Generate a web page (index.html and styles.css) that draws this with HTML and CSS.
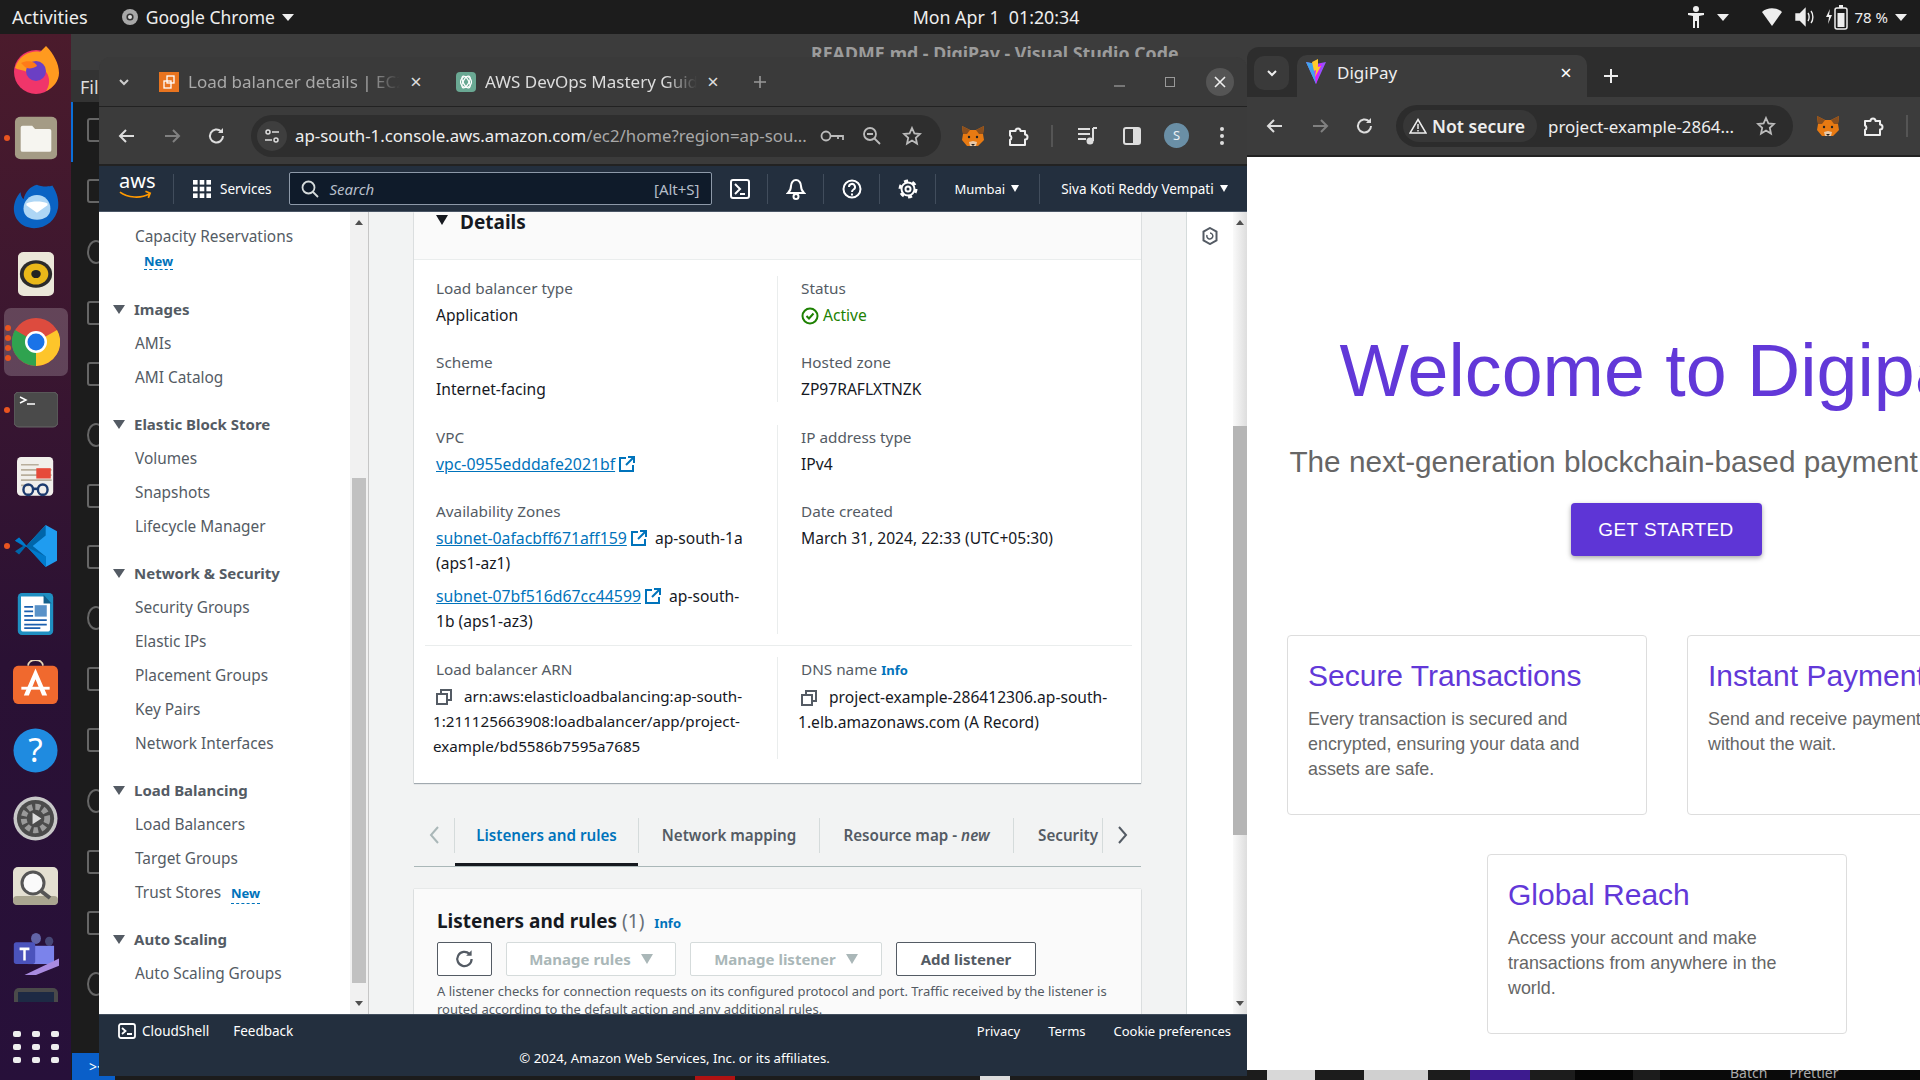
FILE: index.html
```html
<!DOCTYPE html>
<html>

<head>
    <title>Desktop</title>
    <link rel="stylesheet" href="styles.css">
</head>

<body>
    <div class="desktop">
        <header class="topbar">
            <div class="top-left">
                <span class="activities">Activities</span>
                <svg width="18" height="18" viewBox="0 0 18 18"><circle cx="9" cy="9" r="8" fill="#a8a8a8"/><circle cx="9" cy="9" r="3.6" fill="#333"/><circle cx="9" cy="9" r="2" fill="#ddd"/></svg>
                <span>Google Chrome</span>
                <i class="tri"></i>
            </div>
            <div class="clock">Mon Apr 1&nbsp; 01:20:34</div>
            <div class="top-right">
                <svg class="t-acc" width="18" height="24" viewBox="0 0 18 24" fill="#eee"><circle cx="9" cy="4" r="3"/><path d="M1 8h16v2l-5 1v12h-2v-7H8v7H6V11l-5-1z"/></svg>
                <i class="tri t-caret1"></i>
                <svg class="t-wifi" width="22" height="20" viewBox="0 0 22 20" fill="#eee"><path d="M1 5C6 0 16 0 21 5L11 19z"/></svg>
                <svg class="t-vol" width="20" height="20" viewBox="0 0 20 20" fill="none" stroke="#eee" stroke-width="1.4"><path d="M1 7h4l5-5v16l-5-5H1z" fill="#eee"/><path d="M13 6c1.500 2 1.500 6 0 8M16 4c2.500 3 2.500 9 0 12"/></svg>
                <svg class="t-bat" width="26" height="26" viewBox="0 0 26 26"><path d="M5 5 1 13h3l-1 7 4-9H4z" fill="#eee"/><rect x="10" y="4" width="12" height="21" rx="2" fill="none" stroke="#eee" stroke-width="1.500"/><rect x="14" y="1" width="4" height="3" fill="#eee"/><rect x="12.500" y="9" width="7" height="14" fill="#eee"/></svg>
                <span class="t-pct">78 %</span>
                <i class="tri"></i>
            </div>
        </header>

        <aside class="dock">
            <div class="dock-item">
                <svg width="46" height="48" viewBox="0 0 46 48"><circle cx="23" cy="26" r="22" fill="#f0356a"/><path d="M2 22C6 8 20 4 27 6l6-6c8 8 13 18 13 27 0 8-6 15-13 18 6-8 4-22-10-25-6 0-9 2-9 6-4-2-8-2-12-4z" fill="#ff9a1f"/><circle cx="23" cy="25" r="10" fill="#6b3fc4"/><path d="M8 17c6-3 14-2 16 3-4 3-10 3-12 1z" fill="#ff7a18"/></svg>
            </div>
            <div class="dock-item run">
                <svg width="44" height="44" viewBox="0 0 46 54" preserveAspectRatio="none"><rect x="1" y="1" width="44" height="52" rx="6" fill="#a49b85"/><path d="M7 14a2 2 0 0 1 2-2h10l3 4h15a2 2 0 0 1 2 2v24a2 2 0 0 1-2 2H9a2 2 0 0 1-2-2z" fill="#f6f5f0"/></svg>
            </div>
            <div class="dock-item">
                <svg width="48" height="46" viewBox="0 0 50 54" preserveAspectRatio="none"><path d="M26 2c3 2 12 3 16 1 5 8 7 18 6 26-2 14-12 24-25 24C10 53 1 42 2 28 3 20 6 14 9 11c0 3 1 6 3 8C14 10 19 4 26 2z" fill="#0a63c4"/><path d="M12 30c0-9 6-16 14-16s14 7 14 16-6 13-14 13-14-4-14-13z" fill="#aed6f5"/><path d="M15 26l11 9 11-9v-2c-6-3-16-3-22 0z" fill="#fff"/></svg>
            </div>
            <div class="dock-item">
                <svg width="36" height="44" viewBox="0 0 38 54" preserveAspectRatio="none"><rect x="0" y="0" width="38" height="54" rx="6" fill="#ebe7d9"/><ellipse cx="19" cy="27" rx="17" ry="17" fill="#2b2b2b"/><ellipse cx="19" cy="27" rx="13" ry="13" fill="#e9b819"/><ellipse cx="19" cy="27" rx="5" ry="5" fill="#222"/></svg>
            </div>
            <div class="dock-item dock-active">
                <svg width="48" height="48" viewBox="0 0 48 48"><circle cx="24" cy="24" r="24" fill="#dd4b3e"/><path d="M24 24 45 12A24 24 0 0 1 24 48z" fill="#fdc52b"/><path d="M24 24 24 48A24 24 0 0 1 3 12z" fill="#2fa34f"/><circle cx="24" cy="24" r="11" fill="#fff"/><circle cx="24" cy="24" r="8.500" fill="#1a73e8"/></svg>
                <div class="dots"><b></b><b></b><b></b><b></b></div>
            </div>
            <div class="dock-item run">
                <svg width="44" height="36" viewBox="0 0 44 36"><rect width="44" height="35" rx="5" fill="#4a4a4a" stroke="#666"/><path d="M6 5l6 3-6 3" fill="none" stroke="#fff" stroke-width="1.500"/><path d="M13 12h8" stroke="#fff" stroke-width="1.500"/></svg>
            </div>
            <div class="dock-item">
                <svg width="37" height="43" viewBox="0 0 46 50" preserveAspectRatio="none"><rect width="45" height="45" rx="5" fill="#f1efeb"/><path d="M5 9h22M5 15h38M5 21h38M5 27h38M5 33h10" stroke="#b8ae9c" stroke-width="2"/><rect x="24" y="13" width="18" height="12" fill="#e64a3a"/><ellipse cx="14" cy="38" rx="6" ry="6" fill="none" stroke="#1d3b6e" stroke-width="3"/><ellipse cx="32" cy="38" rx="6" ry="6" fill="none" stroke="#1d3b6e" stroke-width="3"/><path d="M20 37h6" stroke="#1d3b6e" stroke-width="3"/></svg>
            </div>
            <div class="dock-item run">
                <svg width="42" height="42" viewBox="0 0 52 40" preserveAspectRatio="none"><path d="M38 0 52 6V34L38 40 14 20z" fill="#1f9cf0"/><path d="M38 0 14 20 5 12 0 15 10 20 0 25 5 28 14 20 38 40V30L22 20 38 10z" fill="#0065a9"/><path d="M0 15 5 12 38 40V30L12 20z" fill="#007acc"/></svg>
            </div>
            <div class="dock-item">
                <svg width="37" height="44" viewBox="0 0 46 50" preserveAspectRatio="none"><rect x="1" y="1" width="44" height="48" rx="5" fill="#1f8fc2"/><path d="M5 5h28l8 8v30a2 2 0 0 1-2 2H7a2 2 0 0 1-2-2z" fill="#fff"/><path d="M33 3l10 10H33z" fill="#15608c"/><path d="M9 17h11M9 22h11M9 27h11M9 32h28M9 37h28M9 41h20" stroke="#1b5fae" stroke-width="2"/><rect x="22" y="15" width="15" height="13" fill="#5a92c8"/></svg>
            </div>
            <div class="dock-item">
                <svg width="45" height="44" viewBox="0 0 54 46" preserveAspectRatio="none"><rect y="6" width="54" height="40" rx="6" fill="#f0692e"/><path d="M18 6c1-8 17-8 18 0" fill="none" stroke="#e7d5b5" stroke-width="2"/><path d="M27 9 41 37h-6l-8-17-8 17h-6z" fill="#fff"/><path d="M10 28h34v3H10z" fill="#fff"/></svg>
            </div>
            <div class="dock-item">
                <svg width="45" height="45" viewBox="0 0 46 46"><circle cx="23" cy="23" r="22.500" fill="#1f8be0"/><text x="23" y="35" text-anchor="middle" class="help-q">?</text></svg>
            </div>
            <div class="dock-item">
                <svg width="45" height="45" viewBox="0 0 46 46"><circle cx="23" cy="23" r="22.500" fill="#c8c8c8"/><circle cx="23" cy="23" r="19" fill="#4b4b4b"/><circle cx="23" cy="23" r="12" fill="none" stroke="#9a9a9a" stroke-width="6" stroke-dasharray="5 3"/><path d="M20 17l9 6-9 6z" fill="#ddd"/></svg>
            </div>
            <div class="dock-item">
                <svg width="45" height="38" viewBox="0 0 45 38"><rect width="45" height="38" rx="5" fill="#e4e0d2"/><rect y="29" width="45" height="9" rx="4" fill="#a9a590"/><circle cx="20" cy="16" r="11" fill="#fafafa" stroke="#555" stroke-width="3"/><path d="M28 24l9 7" stroke="#555" stroke-width="4"/></svg>
            </div>
            <div class="dock-item">
                <svg width="46" height="42" viewBox="0 0 56 46" preserveAspectRatio="none"><ellipse cx="28" cy="6" rx="6" ry="6" fill="#6264a7"/><ellipse cx="44" cy="9" rx="5" ry="5" fill="#464775"/><path d="M18 14h32v20H18z" fill="#7b83eb"/><rect x="1" y="10" width="26" height="24" rx="3" fill="#4b53bc"/><path d="M8 16h12v3h-4.500v11h-3V19H8z" fill="#fff"/><path d="M14 46 56 28v8L28 46z" fill="#a98be0"/></svg>
            </div>
            <div class="dock-item dock-cut">
                <svg width="44" height="14" viewBox="0 0 44 14"><rect width="44" height="30" rx="5" fill="#4a4a4a"/><rect x="4" y="4" width="36" height="26" fill="#1d2a44"/></svg>
            </div>
            <div class="dock-apps">
                <b></b><b></b><b></b><b></b><b></b><b></b><b></b><b></b><b></b>
            </div>
        </aside>

        <div class="vscode">
            <div class="vs-title">README.md - DigiPay - Visual Studio Code</div>
            <div class="vs-menu">Fil</div>
            <div class="vs-body">
                <div class="vs-activity">
                    <i class="vs-ic"></i><i class="vs-ic"></i><i class="vs-ic"></i><i class="vs-ic"></i><i class="vs-ic"></i><i class="vs-ic"></i><i class="vs-ic"></i><i class="vs-ic"></i><i class="vs-ic"></i><i class="vs-ic"></i><i class="vs-ic"></i><i class="vs-ic"></i><i class="vs-ic"></i><i class="vs-ic"></i><i class="vs-ic"></i>
                </div>
                <div class="vs-thumbs">
                    <span class="th th-red"></span><span class="th th-grey"></span><span class="th th-doc1"></span><span class="th th-doc2"></span><span class="th th-purple"></span><span class="th th-black"></span>
                </div>
            </div>
            <div class="vs-status">
                <span class="vs-remote">&gt;&lt;</span>
                <span class="vs-status-text">Batch &nbsp; &nbsp; &nbsp;Prettier</span>
            </div>
        </div>

        <!-- aws window -->
        <div class="chrome aws-win">
            <div class="tabstrip">
                <svg class="tab-chev" width="14" height="14" viewBox="0 0 14 14" fill="none" stroke="#ccc" stroke-width="2"><path d="M3 5l4 4 4-4"/></svg>
                <div class="tab">
                    <svg width="20" height="20" viewBox="0 0 20 20"><rect width="20" height="20" fill="#e8741f"/><rect x="8" y="4" width="7" height="7" fill="none" stroke="#fff" stroke-width="1.300"/><rect x="5" y="9" width="7" height="7" fill="none" stroke="#fff" stroke-width="1.300"/></svg>
                    <span class="tab-title">Load balancer details | EC2</span>
                    <span class="tab-x">&#215;</span>
                </div>
                <div class="tab">
                    <svg width="20" height="20" viewBox="0 0 20 20"><rect width="20" height="20" rx="4" fill="#6aa893"/><g fill="none" stroke="#fff" stroke-width="1.200"><circle cx="10" cy="10" r="5.500"/><ellipse cx="10" cy="10" rx="6.500" ry="2.800" transform="rotate(60 10 10)"/><ellipse cx="10" cy="10" rx="6.500" ry="2.800" transform="rotate(-60 10 10)"/></g></svg>
                    <span class="tab-title tab-title-on">AWS DevOps Mastery Guide</span>
                    <span class="tab-x">&#215;</span>
                </div>
                <svg class="tab-plus" width="16" height="16" viewBox="0 0 16 16" stroke="#999" stroke-width="1.600"><path d="M8 2v12M2 8h12"/></svg>
                <div class="win-ctrls">
                    <i class="wc-min"></i>
                    <i class="wc-max"></i>
                    <span class="wc-close"><svg width="12" height="12" viewBox="0 0 12 12" stroke="#eee" stroke-width="1.600"><path d="M1 1l10 10M11 1 1 11"/></svg></span>
                </div>
            </div>
            <div class="toolbar">
                <span class="tb-btn"><svg width="20" height="20" viewBox="0 0 20 20" fill="none" stroke="#ddd" stroke-width="2"><path d="M17 10H3M9 4l-6 6 6 6"/></svg></span>
                <span class="tb-btn"><svg width="20" height="20" viewBox="0 0 20 20" fill="none" stroke="#808080" stroke-width="2"><path d="M3 10h14M11 4l6 6-6 6"/></svg></span>
                <span class="tb-btn"><svg width="20" height="20" viewBox="0 0 20 20" fill="none" stroke="#ddd" stroke-width="2"><path d="M16 10a6.500 6.500 0 1 1-2-4.700"/><path d="M16 2v5h-5" fill="#ddd" stroke="none"/></svg></span>
                <div class="omni omni-aws">
                    <span class="omni-tune"><svg width="16" height="16" viewBox="0 0 16 16" fill="none" stroke="#ddd" stroke-width="1.500"><circle cx="4" cy="4" r="2"/><path d="M8 4h7M1 12h7"/><circle cx="12" cy="12" r="2"/></svg></span>
                    <span class="omni-url"><span class="url-host">ap-south-1.console.aws.amazon.com</span>/ec2/home?region=ap-sou...</span>
                    <svg class="om-key" width="24" height="14" viewBox="0 0 24 14" fill="none" stroke="#bbb" stroke-width="1.800"><circle cx="6" cy="7" r="4.500"/><path d="M11 7h12v4M18 7v3"/></svg>
                    <svg class="om-zoom" width="20" height="20" viewBox="0 0 20 20" fill="none" stroke="#bbb" stroke-width="1.800"><circle cx="8" cy="8" r="6"/><path d="M12.500 12.500 18 18M5 8h6"/></svg>
                    <svg class="om-star" width="20" height="20" viewBox="0 0 20 20" fill="none" stroke="#bbb" stroke-width="1.800"><path d="M10 2l2.400 5.400 5.600.6-4.200 3.900 1.200 5.700-5-3-5 3 1.200-5.700L2 8l5.600-.6z"/></svg>
                </div>
                <span class="tb-btn tb-fox"><svg width="24" height="24" viewBox="0 0 24 24"><path d="M1 2l8 4h6l8-4-1 8 1 6-6 6H6l-5-6 1-6z" fill="#e87a12"/><path d="M1 2l8 4-3 4H2zM23 2l-8 4 3 4h4z" fill="#8a4f1e"/><circle cx="8" cy="13" r="1.200" fill="#222"/><circle cx="16" cy="13" r="1.200" fill="#222"/><path d="M8 18l4-1 4 1-1 4H9z" fill="#e8c8a8"/><path d="M10 20h4l-2 2z" fill="#222"/></svg></span>
                <span class="tb-btn"><svg width="22" height="22" viewBox="0 0 22 22" fill="none" stroke="#eee" stroke-width="2" stroke-linejoin="round"><path d="M3 6h5.500a2.500 2.500 0 0 1 5 0H18v3.500a2.500 2.500 0 0 1 0 5V20H3v-5a2.500 2.500 0 0 0 0-4.500z"/></svg></span>
                <i class="tb-sep"></i>
                <span class="tb-btn"><svg width="22" height="22" viewBox="0 0 22 22" fill="none" stroke="#ddd" stroke-width="2"><path d="M2 4h12M2 9h12M2 14h8M17 3v13"/><circle cx="14" cy="16" r="2.500" fill="#ddd"/><path d="M17 3h4"/></svg></span>
                <span class="tb-btn"><svg width="20" height="20" viewBox="0 0 20 20"><rect x="2" y="2" width="16" height="16" rx="2" fill="none" stroke="#ddd" stroke-width="2"/><rect x="11" y="2" width="7" height="16" fill="#ddd"/></svg></span>
                <span class="tb-btn"><span class="avatar">S</span></span>
                <span class="tb-btn"><svg width="6" height="20" viewBox="0 0 6 20" fill="#ddd"><circle cx="3" cy="3" r="2"/><circle cx="3" cy="10" r="2"/><circle cx="3" cy="17" r="2"/></svg></span>
            </div>

            <nav class="awsnav">
                <div class="aws-logo">
                    <span class="aws-word">aws</span>
                    <svg width="34" height="10" viewBox="0 0 36 10" fill="none" stroke="#f90" stroke-width="1.800"><path d="M1 2c8 6 22 7 31 2M28 1l5 2-2 5"/></svg>
                </div>
                <i class="nav-sep"></i>
                <svg class="svc-grid" width="18" height="18" viewBox="0 0 18 18" fill="#fff"><rect width="4.600" height="4.600"/><rect x="6.700" width="4.600" height="4.600"/><rect x="13.400" width="4.600" height="4.600"/><rect y="6.700" width="4.600" height="4.600"/><rect x="6.700" y="6.700" width="4.600" height="4.600"/><rect x="13.400" y="6.700" width="4.600" height="4.600"/><rect y="13.400" width="4.600" height="4.600"/><rect x="6.700" y="13.400" width="4.600" height="4.600"/><rect x="13.400" y="13.400" width="4.600" height="4.600"/></svg>
                <span class="nav-txt svc-txt">Services</span>
                <div class="nav-search">
                    <svg width="18" height="18" viewBox="0 0 18 18" fill="none" stroke="#d5dbdb" stroke-width="1.800"><circle cx="7.500" cy="7.500" r="6"/><path d="M12 12l5 5"/></svg>
                    <span class="s-hint">Search</span>
                    <span class="s-key">[Alt+S]</span>
                </div>
                <span class="nav-ic"><svg width="20" height="20" viewBox="0 0 20 20" fill="none" stroke="#fff" stroke-width="2"><rect x="1" y="1" width="18" height="18" rx="2"/><path d="M5 5l5 5-5 5M10 15h5"/></svg></span>
                <i class="nav-sep"></i>
                <span class="nav-ic"><svg width="20" height="22" viewBox="0 0 20 22" fill="none" stroke="#fff" stroke-width="2"><path d="M10 2c-3 0-5 3-5 6 0 4-3 7-3 7h16s-3-3-3-7c0-3-2-6-5-6z"/><circle cx="10" cy="18.500" r="2.500"/></svg></span>
                <i class="nav-sep"></i>
                <span class="nav-ic"><svg width="20" height="20" viewBox="0 0 20 20" fill="none" stroke="#fff" stroke-width="2"><circle cx="10" cy="10" r="8.500"/><path d="M7 8a3 3 0 1 1 4.500 2.500c-1 .6-1.500 1-1.500 2.500M10 14.500v2"/></svg></span>
                <i class="nav-sep"></i>
                <span class="nav-ic"><svg width="20" height="20" viewBox="0 0 20 20" fill="none" stroke="#fff"><circle cx="10" cy="10" r="6.500" stroke-width="2"/><circle cx="10" cy="10" r="8" stroke-width="3" stroke-dasharray="4 4.380"/><circle cx="10" cy="10" r="2.500" stroke-width="2"/></svg></span>
                <i class="nav-sep"></i>
                <span class="nav-txt nav-region">Mumbai</span>
                <i class="nav-tri"></i>
                <i class="nav-sep nav-sep-user"></i>
                <span class="nav-txt nav-user">Siva Koti Reddy Vempati</span>
                <i class="nav-tri"></i>
            </nav>

            <div class="aws-body">
                <aside class="sidebar">
                    <div class="side-list">
                        <a class="side-item">Capacity Reservations</a>
                        <a class="side-new">New</a>
                        <div class="side-head">Images</div>
                        <a class="side-item">AMIs</a>
                        <a class="side-item">AMI Catalog</a>
                        <div class="side-head">Elastic Block Store</div>
                        <a class="side-item">Volumes</a>
                        <a class="side-item">Snapshots</a>
                        <a class="side-item">Lifecycle Manager</a>
                        <div class="side-head">Network &amp; Security</div>
                        <a class="side-item">Security Groups</a>
                        <a class="side-item">Elastic IPs</a>
                        <a class="side-item">Placement Groups</a>
                        <a class="side-item">Key Pairs</a>
                        <a class="side-item">Network Interfaces</a>
                        <div class="side-head">Load Balancing</div>
                        <a class="side-item">Load Balancers</a>
                        <a class="side-item">Target Groups</a>
                        <a class="side-item">Trust Stores <span class="side-new-inline">New</span></a>
                        <div class="side-head">Auto Scaling</div>
                        <a class="side-item">Auto Scaling Groups</a>
                    </div>
                    <div class="scrollbar side-scroll"><i class="sb-up"></i><i class="sb-thumb"></i><i class="sb-down"></i></div>
                </aside>

                <main class="aws-main">
                    <section class="panel details">
                        <div class="panel-head">
                            <i class="det-tri"></i>
                            <h2>Details</h2>
                        </div>
                        <div class="det-group det-g1">
                            <div class="det-col">
                                <div class="kv"><label>Load balancer type</label><p>Application</p></div>
                                <div class="kv"><label>Scheme</label><p>Internet-facing</p></div>
                            </div>
                            <div class="det-col">
                                <div class="kv"><label>Status</label><p class="active"><svg width="18" height="18" viewBox="0 0 18 18" fill="none" stroke="#1d8102" stroke-width="2"><circle cx="9" cy="9" r="7.500"/><path d="M5.500 9l2.500 2.500 4.500-5"/></svg>Active</p></div>
                                <div class="kv"><label>Hosted zone</label><p>ZP97RAFLXTNZK</p></div>
                            </div>
                        </div>
                        <div class="det-group det-g2">
                            <div class="det-col">
                                <div class="kv"><label>VPC</label><p><a class="ext">vpc-0955edddafe2021bf</a><svg class="ext-ic" width="16" height="16" viewBox="0 0 16 16" fill="none" stroke="#0073bb" stroke-width="2"><path d="M7 2H1v13h13V9M9 1h6v6M15 1 7 9"/></svg></p></div>
                                <div class="kv"><label>Availability Zones</label>
                                    <p><a class="ext">subnet-0afacbff671aff159</a><svg class="ext-ic" width="16" height="16" viewBox="0 0 16 16" fill="none" stroke="#0073bb" stroke-width="2"><path d="M7 2H1v13h13V9M9 1h6v6M15 1 7 9"/></svg> &nbsp;ap-south-1a<br>(aps1-az1)</p>
                                    <p class="az2"><a class="ext">subnet-07bf516d67cc44599</a><svg class="ext-ic" width="16" height="16" viewBox="0 0 16 16" fill="none" stroke="#0073bb" stroke-width="2"><path d="M7 2H1v13h13V9M9 1h6v6M15 1 7 9"/></svg> &nbsp;ap-south-<br>1b (aps1-az3)</p>
                                </div>
                            </div>
                            <div class="det-col">
                                <div class="kv"><label>IP address type</label><p>IPv4</p></div>
                                <div class="kv"><label>Date created</label><p>March 31, 2024, 22:33 (UTC+05:30)</p></div>
                            </div>
                        </div>
                        <hr class="det-rule">
                        <div class="det-group det-g3">
                            <div class="det-col">
                                <div class="kv"><label>Load balancer ARN</label>
                                    <p class="copyable copy-arn"><svg class="copy-ic" width="16" height="16" viewBox="0 0 16 16" fill="none" stroke="#545b64" stroke-width="2"><rect x="1" y="5" width="10" height="10"/><path d="M5 5V1h10v10h-4"/></svg>arn:aws:elasticloadbalancing:ap-south-<br>1:211125663908:loadbalancer/app/project-<br>example/bd5586b7595a7685</p>
                                </div>
                            </div>
                            <div class="det-col">
                                <div class="kv"><label>DNS name <a class="info">Info</a></label>
                                    <p class="copyable"><svg class="copy-ic" width="16" height="16" viewBox="0 0 16 16" fill="none" stroke="#545b64" stroke-width="2"><rect x="1" y="5" width="10" height="10"/><path d="M5 5V1h10v10h-4"/></svg>project-example-286412306.ap-south-<br>1.elb.amazonaws.com (A Record)</p>
                                </div>
                            </div>
                        </div>
                    </section>

                    <div class="lb-tabs">
                        <svg class="tab-arrow" width="12" height="20" viewBox="0 0 12 20" fill="none" stroke="#aab7b8" stroke-width="2"><path d="M10 2 3 10l7 8"/></svg>
                        <a class="lb-tab lb-tab-on">Listeners and rules</a>
                        <a class="lb-tab lb-tab-2">Network mapping</a>
                        <a class="lb-tab lb-tab-3">Resource map - <em>new</em></a>
                        <a class="lb-tab lb-tab-4">Security</a>
                        <svg class="tab-arrow tab-arrow-r" width="12" height="20" viewBox="0 0 12 20" fill="none" stroke="#545b64" stroke-width="2"><path d="M2 2l7 8-7 8"/></svg>
                    </div>

                    <section class="panel listeners">
                        <h2>Listeners and rules <span class="count">(1)</span> <a class="info">Info</a></h2>
                        <div class="btn-row">
                            <button class="btn btn-icon"><svg width="22" height="22" viewBox="0 0 20 20" fill="none" stroke="#545b64" stroke-width="2"><path d="M16 10a6.500 6.500 0 1 1-2-4.700"/><path d="M16 2v5h-5" fill="#545b64" stroke="none"/></svg></button>
                            <button class="btn btn-off btn-rules">Manage rules <i class="btn-tri"></i></button>
                            <button class="btn btn-off btn-listener">Manage listener <i class="btn-tri"></i></button>
                            <button class="btn btn-add">Add listener</button>
                        </div>
                        <p class="listeners-txt">A listener checks for connection requests on its configured protocol and port. Traffic received by the listener is routed according to the default action and any additional rules.</p>
                    </section>
                </main>

                <aside class="rail">
                    <svg width="16" height="18" viewBox="0 0 16 18" fill="none" stroke="#545b64" stroke-width="2"><path d="M8 1l6.500 3.700v8.600L8 17l-6.500-3.700V4.700z"/><path d="M5 8a3 3 0 1 0 3-2" stroke-width="1.500"/></svg>
                </aside>
                <div class="scrollbar main-scroll"><i class="sb-up"></i><i class="sb-thumb"></i><i class="sb-down"></i></div>
            </div>

            <footer class="aws-foot">
                <div class="foot-top">
                    <svg width="18" height="18" viewBox="0 0 18 18" fill="none" stroke="#fff" stroke-width="1.800"><rect x="1" y="2" width="16" height="14" rx="2"/><path d="M4 6l3.500 3L4 12M9 12h5"/></svg>
                    <span class="foot-shell">CloudShell</span>
                    <span class="foot-fb">Feedback</span>
                    <span class="foot-links"><span>Privacy</span><span>Terms</span><span>Cookie preferences</span></span>
                </div>
                <div class="foot-copy">&#169; 2024, Amazon Web Services, Inc. or its affiliates.</div>
            </footer>
        </div>

        <!-- digipay window -->
        <div class="chrome digi-win">
            <div class="tabstrip digi-strip">
                <span class="digi-chev"><svg width="14" height="14" viewBox="0 0 14 14" fill="none" stroke="#eee" stroke-width="2"><path d="M3 5l4 4 4-4"/></svg></span>
                <div class="digi-tab">
                    <svg width="20" height="26" viewBox="0 0 20 26"><path d="M0 3l10 2 10-2-10 22z" fill="#9a4dff"/><path d="M0 3l10 2v20z" fill="#41a5ee"/><path d="M16 4 10 25l-2-16z" fill="#e01bff"/><path d="M12 0 6 3l2 9 2-1-1 7 6-11-3 1z" fill="#ffcb2b"/></svg>
                    <span class="digi-tab-title">DigiPay</span>
                    <span class="tab-x tab-x-on">&#215;</span>
                </div>
                <svg class="digi-plus" width="16" height="16" viewBox="0 0 16 16" stroke="#eee" stroke-width="2"><path d="M8 1v14M1 8h14"/></svg>
            </div>
            <div class="toolbar digi-bar">
                <span class="tb-btn"><svg width="20" height="20" viewBox="0 0 20 20" fill="none" stroke="#ddd" stroke-width="2"><path d="M17 10H3M9 4l-6 6 6 6"/></svg></span>
                <span class="tb-btn"><svg width="20" height="20" viewBox="0 0 20 20" fill="none" stroke="#808080" stroke-width="2"><path d="M3 10h14M11 4l6 6-6 6"/></svg></span>
                <span class="tb-btn"><svg width="20" height="20" viewBox="0 0 20 20" fill="none" stroke="#ddd" stroke-width="2"><path d="M16 10a6.500 6.500 0 1 1-2-4.700"/><path d="M16 2v5h-5" fill="#ddd" stroke="none"/></svg></span>
                <div class="omni omni-digi">
                    <span class="not-secure"><svg width="18" height="16" viewBox="0 0 18 16" fill="none" stroke="#eee" stroke-width="1.500"><path d="M9 1.500 17 15H1zM9 6v5M9 12v1.500"/></svg>Not secure</span>
                    <span class="omni-url url-digi">project-example-2864...</span>
                    <svg class="om-star" width="20" height="20" viewBox="0 0 20 20" fill="none" stroke="#bbb" stroke-width="1.800"><path d="M10 2l2.400 5.400 5.600.6-4.200 3.900 1.200 5.700-5-3-5 3 1.200-5.700L2 8l5.600-.6z"/></svg>
                </div>
                <span class="tb-btn tb-fox"><svg width="24" height="24" viewBox="0 0 24 24"><path d="M1 2l8 4h6l8-4-1 8 1 6-6 6H6l-5-6 1-6z" fill="#e87a12"/><path d="M1 2l8 4-3 4H2zM23 2l-8 4 3 4h4z" fill="#8a4f1e"/><circle cx="8" cy="13" r="1.200" fill="#222"/><circle cx="16" cy="13" r="1.200" fill="#222"/><path d="M8 18l4-1 4 1-1 4H9z" fill="#e8c8a8"/><path d="M10 20h4l-2 2z" fill="#222"/></svg></span>
                <span class="tb-btn"><svg width="22" height="22" viewBox="0 0 22 22" fill="none" stroke="#eee" stroke-width="2" stroke-linejoin="round"><path d="M3 6h5.500a2.500 2.500 0 0 1 5 0H18v3.500a2.500 2.500 0 0 1 0 5V20H3v-5a2.500 2.500 0 0 0 0-4.500z"/></svg></span>
                <i class="tb-sep"></i>
            </div>
            <div class="digi-page">
                <div class="digi-inner">
                    <h1>Welcome to Digipay</h1>
                    <p class="digi-sub">The next-generation blockchain-based payment solution</p>
                    <a class="digi-btn">GET STARTED</a>
                    <div class="digi-cards">
                        <div class="digi-card">
                            <h3>Secure Transactions</h3>
                            <p>Every transaction is secured and encrypted, ensuring your data and assets are safe.</p>
                        </div>
                        <div class="digi-card">
                            <h3>Instant Payments</h3>
                            <p>Send and receive payments<br>without the wait.</p>
                        </div>
                        <div class="digi-card">
                            <h3>Global Reach</h3>
                            <p>Access your account and make transactions from anywhere in the world.</p>
                        </div>
                    </div>
                </div>
            </div>
        </div>
    </div>
</body>

</html>
```

FILE: styles.css
```css
* {
    box-sizing: border-box;
}

html,
body {
    margin: 0;
    height: 100%;
    overflow: hidden;
}

body {
    font-family: "Noto Sans", sans-serif;
    font-size: 15px;
    color: #16191f;
}

i {
    display: block;
    font-style: normal;
}

svg {
    flex: none;
    display: block;
}

p,
h1,
h2,
h3 {
    margin: 0;
}

.desktop {
    position: relative;
    width: 1920px;
    height: 1080px;
    background: #2b2b2b;
    overflow: hidden;
}

/* top bar */
.topbar {
    position: absolute;
    top: 0;
    left: 0;
    width: 1920px;
    height: 34px;
    background: #1c1c1c;
    color: #eee;
    font-size: 17.5px;
    display: grid;
    grid-template-columns: 1fr auto 1fr;
    padding-left: 72px;
    align-items: center;
}

.top-left {
    display: flex;
    align-items: center;
    margin-left: -60px;
}

.top-left svg {
    margin-right: 7px;
}

.activities {
    margin-right: 33px;
    font-size: 18.2px;
}

.tri {
    width: 0;
    height: 0;
    border-left: 6px solid transparent;
    border-right: 6px solid transparent;
    border-top: 7px solid #eee;
    margin-left: 7px;
}

.clock {
    font-size: 17.8px;
}

.top-right {
    display: flex;
    align-items: center;
    justify-content: flex-end;
    padding-right: 13px;
}

.t-caret1 {
    margin: 0 32px 0 12px;
}

.t-wifi {
    margin-right: 12px;
}

.t-vol {
    margin-right: 10px;
}

.t-bat {
    margin-right: 3px;
}

.t-pct {
    font-size: 15px;
}

/* dock */
.dock {
    position: absolute;
    top: 34px;
    left: 0;
    bottom: 0;
    width: 71px;
    background: linear-gradient(#4b1b2c, #2a1134 60%, #27103a);
    display: flex;
    flex-direction: column;
    align-items: center;
    padding-top: 2px;
}

.dock-item {
    position: relative;
    width: 71px;
    height: 68px;
    display: flex;
    align-items: center;
    justify-content: center;
}

.dock-item.run::before {
    content: "";
    position: absolute;
    left: 4px;
    top: 31px;
    width: 6px;
    height: 6px;
    border-radius: 50%;
    background: #e95420;
}

.dock-active {
    width: 64px;
    border-radius: 7px;
    background: rgba(255, 255, 255, 0.2);
}

.dots {
    position: absolute;
    left: 1px;
    top: 17px;
    display: flex;
    flex-direction: column;
    gap: 4px;
}

.dots b {
    width: 6px;
    height: 6px;
    border-radius: 50%;
    background: #e95420;
}

.dock-cut {
    height: 22px;
    align-items: flex-start;
    overflow: hidden;
}

.dock-apps {
    margin-top: 21px;
    display: grid;
    grid-template-columns: repeat(3, 8px);
    gap: 7px 11px;
}

.dock-apps b {
    width: 8px;
    height: 6px;
    border-radius: 2px;
    background: #eee;
}

.help-q {
    font-family: "Noto Sans", sans-serif;
    font-size: 34px;
    fill: #fff;
}

/* vs code behind the browsers */
.vscode {
    position: absolute;
    top: 34px;
    left: 71px;
    right: 0;
    bottom: 0;
    display: flex;
    flex-direction: column;
    background: #1c1c1c;
}

.vs-title {
    height: 36px;
    background: #3c3c3c;
    color: #9b9b9b;
    font-size: 17.8px;
    font-weight: 700;
    padding: 7px 0 0 740px;
    white-space: nowrap;
    flex: none;
}

.vs-menu {
    height: 32px;
    background: #333;
    color: #ddd;
    font-size: 18px;
    padding: 5px 0 0 9px;
    flex: none;
}

.vs-body {
    position: relative;
    flex: 1;
    display: flex;
}

.vs-body::before {
    content: "";
    position: absolute;
    left: 0;
    top: 0;
    width: 2px;
    height: 60px;
    background: #0a6fd8;
}

.vs-activity {
    width: 28px;
    display: flex;
    flex-direction: column;
    gap: 37px;
    padding: 16px 0 0 16px;
    overflow: hidden;
}

.vs-ic {
    width: 18px;
    height: 24px;
    border: 2px solid #666;
    border-radius: 3px;
    flex: none;
}

.vs-ic:nth-child(3n) {
    border-radius: 50%;
}

.vs-thumbs {
    flex: 1;
    display: flex;
    align-items: flex-end;
    height: 100%;
}

.th {
    height: 10px;
    flex: none;
    background: #333;
}

.th-red {
    width: 40px;
    margin-left: 596px;
    height: 5px;
    background: #b01212;
}

.th-grey {
    width: 30px;
    margin-left: 245px;
    height: 5px;
    background: #ddd;
}

.th-doc1 {
    width: 48px;
    margin-left: 257px;
    background: #d8d8d8;
}

.th-doc2 {
    width: 64px;
    margin-left: 49px;
    background: #d0d0d0;
}

.th-purple {
    width: 60px;
    margin-left: 42px;
    background: #3d1b8f;
}

.th-black {
    width: 58px;
    margin-left: 45px;
    background: #060606;
}

.vs-status {
    position: absolute;
    left: 0;
    right: 0;
    bottom: 0;
    height: 27px;
    display: flex;
    align-items: flex-end;
}

.vs-remote {
    width: 43px;
    height: 27px;
    margin-left: 1px;
    background: #0a5fc9;
    color: #fff;
    font-size: 14px;
    line-height: 27px;
    padding-left: 17px;
}

.vs-status-text {
    position: absolute;
    left: 1589px;
    right: 0;
    bottom: 0;
    height: 10px;
    line-height: 6px;
    background: #0a0a0a;
    color: #aaa;
    font-size: 14px;
    padding-left: 70px;
    white-space: nowrap;
    overflow: hidden;
}

/* browser windows */
.chrome {
    position: absolute;
    display: flex;
    flex-direction: column;
    background: #3a3a3a;
    border-radius: 12px 12px 0 0;
    overflow: hidden;
}

.aws-win {
    left: 99px;
    top: 57px;
    width: 1148px;
    height: 1019px;
}

.digi-win {
    left: 1247px;
    top: 47px;
    width: 673px;
    height: 1023px;
    border-radius: 12px 0 0 0;
}

.tabstrip {
    height: 50px;
    display: flex;
    align-items: center;
    background: #3a3a3a;
    border-bottom: 1px solid #222;
    flex: none;
}

.tab-chev {
    margin: 0 12px 0 18px;
}

.tab {
    width: 290px;
    height: 44px;
    display: flex;
    align-items: center;
    gap: 9px;
    padding: 0 10px 0 16px;
    margin-right: 7px;
    color: #a9a9a9;
    font-size: 17px;
}

.tab-title {
    flex: 1;
    white-space: nowrap;
    overflow: hidden;
    -webkit-mask-image: linear-gradient(90deg, #000 85%, transparent);
}

.tab-title-on {
    color: #dcdcdc;
}

.tab-x {
    color: #ddd;
    font-size: 20px;
    width: 14px;
    text-align: center;
}

.tab-plus {
    margin-left: 15px;
}

.win-ctrls {
    margin-left: auto;
    display: flex;
    align-items: center;
    padding-right: 13px;
}

.wc-min {
    width: 11px;
    height: 2px;
    margin-top: 8px;
    background: #777;
}

.wc-max {
    width: 10px;
    height: 10px;
    margin: 0 31px 0 40px;
    border: 1px solid #999;
}

.wc-close {
    width: 28px;
    height: 28px;
    border-radius: 50%;
    background: #555;
    display: flex;
    align-items: center;
    justify-content: center;
}

.toolbar {
    height: 59px;
    display: flex;
    align-items: center;
    padding-left: 5px;
    background: #3b3b3b;
    border-bottom: 2px solid #222;
    flex: none;
}

.tb-btn {
    width: 45px;
    height: 40px;
    display: flex;
    align-items: center;
    justify-content: center;
    flex: none;
}

.tb-sep {
    width: 2px;
    height: 22px;
    margin: 0 11px;
    background: #555;
}

.tb-fox {
    margin-left: 9px;
}

.avatar {
    width: 25px;
    height: 25px;
    border-radius: 50%;
    background: #6a8fa6;
    color: #eaf1f5;
    font-size: 13px;
    line-height: 25px;
    text-align: center;
}

.omni {
    height: 42px;
    border-radius: 21px;
    background: #2e2e2e;
    display: flex;
    align-items: center;
    margin-left: 12px;
    flex: none;
}

.omni-aws {
    width: 690px;
    padding: 0 19px 0 6px;
}

.omni-tune {
    width: 30px;
    height: 30px;
    border-radius: 50%;
    background: #3e3e3e;
    display: flex;
    align-items: center;
    justify-content: center;
    margin-right: 8px;
}

.omni-url {
    flex: 1;
    white-space: nowrap;
    color: #a8a8a8;
    font-size: 16.8px;
    overflow: hidden;
}

.url-host {
    color: #eee;
}

.om-key {
    margin: 0 18px 0 8px;
}

.om-zoom {
    margin: 0 20px 0 0;
}

/* aws top nav */
.awsnav {
    height: 46px;
    display: flex;
    align-items: center;
    background: #232f3e;
    border-bottom: 1px solid #4a5666;
    flex: none;
}

.aws-logo {
    width: 74px;
    padding-left: 20px;
    line-height: 1;
}

.aws-word {
    display: block;
    color: #fff;
    font-size: 20px;
    line-height: 18px;
    margin-top: -6px;
}

.nav-sep {
    width: 1px;
    height: 30px;
    background: #414d5c;
    flex: none;
}

.svc-grid {
    margin-left: 19px;
}

.nav-txt {
    color: #fff;
    font-size: 13.5px;
    white-space: nowrap;
}

.svc-txt {
    margin: 0 17px 0 9px;
}

.nav-search {
    width: 423px;
    height: 33px;
    display: flex;
    align-items: center;
    gap: 11px;
    padding: 0 11px;
    background: #0f1b2a;
    border: 1px solid #8d99a8;
    border-radius: 2px;
    margin-right: 18px;
}

.s-hint {
    flex: 1;
    color: #b6bec9;
    font-style: italic;
    font-size: 15px;
}

.s-key {
    color: #b6bec9;
    font-size: 15px;
}

.nav-ic {
    width: 20px;
    margin-right: 17px;
    flex: none;
}

.nav-ic + .nav-sep {
    margin-right: 18px;
}

.nav-region {
    margin-left: 1px;
    font-size: 13px;
}

.nav-tri {
    width: 0;
    height: 0;
    margin-left: 6px;
    border-left: 4.500px solid transparent;
    border-right: 4.500px solid transparent;
    border-top: 7px solid #fff;
    flex: none;
}

.nav-sep-user {
    margin: 0 21px 0 20px;
}

/* aws layout */
.aws-body {
    flex: 1;
    min-height: 0;
    display: flex;
    background: #f2f3f3;
    position: relative;
}

.sidebar {
    width: 270px;
    display: flex;
    background: #fff;
    border-right: 1px solid #c6c6c6;
    flex: none;
}

.side-list {
    width: 252px;
    padding: 8px 0 0 36px;
    color: #545b64;
    font-size: 15.4px;
}

.side-item {
    display: block;
    height: 34px;
    line-height: 34px;
    white-space: nowrap;
}

.side-new {
    display: block;
    width: 29px;
    height: 17px;
    margin: -1px 0 0 9px;
    color: #0073bb;
    font-size: 13px;
    font-weight: 700;
    line-height: 16px;
    border-bottom: 1px dashed #0073bb;
}

.side-new-inline {
    color: #0073bb;
    font-size: 13px;
    font-weight: 700;
    margin-left: 6px;
    padding-bottom: 1px;
    border-bottom: 1px dashed #0073bb;
}

.side-head {
    position: relative;
    height: 35.5px;
    margin-top: 11.5px;
    margin-left: -1px;
    line-height: 34px;
    font-weight: 700;
    font-size: 15px;
}

.side-head::before {
    content: "";
    position: absolute;
    left: -21px;
    top: 13px;
    border-left: 6px solid transparent;
    border-right: 6px solid transparent;
    border-top: 9px solid #545b64;
}

.side-new + .side-head {
    margin-top: 21.5px;
}

.scrollbar {
    width: 18px;
    position: relative;
    background: #f1f1f1;
    flex: none;
}

.sb-up,
.sb-down {
    position: absolute;
    left: 5px;
    width: 0;
    height: 0;
    border-left: 4px solid transparent;
    border-right: 4px solid transparent;
}

.sb-up {
    top: 8px;
    border-bottom: 5px solid #505050;
}

.sb-down {
    bottom: 8px;
    border-top: 5px solid #505050;
}

.sb-thumb {
    position: absolute;
    left: 2px;
    right: 2px;
    background: #c1c1c1;
}

.side-scroll .sb-thumb {
    top: 266px;
    height: 505px;
}

.aws-main {
    width: 817px;
    padding-left: 45px;
    overflow: hidden;
    flex: none;
}

.panel {
    width: 727px;
    background: #fff;
    box-shadow: 0 1px 1px rgba(0, 22, 43, 0.3), 0 0 1px rgba(0, 22, 43, 0.25);
}

.panel-head {
    height: 48px;
    display: flex;
    padding-left: 22px;
    background: #fafafa;
    border-bottom: 1px solid #eaeded;
}

.panel-head h2 {
    font-size: 19px;
    line-height: 20px;
    margin-top: 0;
    margin-left: 12px;
}

.det-tri {
    width: 0;
    height: 0;
    margin-top: 3px;
    border-left: 6px solid transparent;
    border-right: 6px solid transparent;
    border-top: 10px solid #16191f;
}

.det-group {
    display: grid;
    grid-template-columns: 341px 1fr;
    padding-left: 22px;
}

.det-g1 {
    margin-top: 16px;
}

.det-g2 {
    margin-top: 23px;
}

.det-g3 {
    margin-top: 11px;
    padding-bottom: 24px;
}

.det-col + .det-col {
    border-left: 1px solid #eaeded;
    padding-left: 23px;
}

.kv + .kv {
    margin-top: 22px;
}

.kv label {
    display: block;
    color: #545b64;
    font-size: 15.3px;
    line-height: 25px;
}

.kv p {
    margin-top: 2px;
    font-size: 15.6px;
    line-height: 25px;
    white-space: nowrap;
}

.kv .az2 {
    margin-top: 8px;
}

.kv .copy-arn {
    font-size: 15.2px;
}

.ext {
    color: #0073bb;
    font-size: 15.8px;
    text-decoration: underline;
}

.ext-ic {
    display: inline-block;
    vertical-align: -2px;
    margin-left: 4px;
}

.active {
    display: flex;
    align-items: center;
    gap: 4px;
    color: #1d8102;
}

.info {
    color: #0073bb;
    font-size: 13px;
    font-weight: 700;
}

.copy-ic {
    display: inline-block;
    vertical-align: -3px;
    margin: 0 12px 0 3px;
}

.copyable {
    margin-left: -3px;
}

.det-rule {
    height: 1px;
    margin: 11px 9px 0 11px;
    border: 0;
    background: #eaeded;
}

/* tabs under details */
.lb-tabs {
    position: relative;
    height: 84px;
    display: flex;
    align-items: flex-start;
    padding-top: 35px;
    border-bottom: 1px solid #aab7b8;
    width: 727px;
}

.tab-arrow {
    margin: 7px 0 0 14px;
}

.lb-tab {
    height: 35px;
    line-height: 35px;
    text-align: center;
    color: #545b64;
    font-weight: 600;
    font-size: 15.2px;
    border-left: 1px solid #d5dbdb;
    white-space: nowrap;
    flex: none;
}

.lb-tab-on {
    position: relative;
    width: 184px;
    margin-left: 14px;
    color: #0073bb;
}

.lb-tab-on::after {
    content: "";
    position: absolute;
    left: 0;
    right: 0;
    top: 45px;
    height: 3px;
    background: #16191f;
}

.lb-tab-2 {
    width: 181px;
}

.lb-tab-3 {
    width: 194px;
}

.lb-tab-4 {
    width: 90px;
    padding-left: 20px;
    border-right: 1px solid #d5dbdb;
}

.tab-arrow-r {
    margin-left: 14px;
}

.listeners {
    margin-top: 22px;
    padding: 19px 23px 0;
    background: #fafafa;
    height: 200px;
}

.listeners h2 {
    font-size: 19px;
    line-height: 26px;
    white-space: nowrap;
}

.listeners .info {
    margin-left: 5px;
}

.count {
    color: #687078;
    font-weight: 400;
}

.btn-row {
    display: flex;
    margin-top: 6px;
}

.btn {
    height: 34px;
    border: 1px solid #545b64;
    border-radius: 2px;
    background: #fff;
    color: #545b64;
    font-family: inherit;
    font-size: 15px;
    font-weight: 700;
    display: flex;
    align-items: center;
    justify-content: center;
}

.btn-icon {
    width: 55px;
    margin-right: 14px;
}

.btn-off {
    border-color: #d5dbdb;
    color: #aab7b8;
    gap: 10px;
    margin-right: 14px;
}

.btn-rules {
    width: 170px;
}

.btn-listener {
    width: 192px;
}

.btn-add {
    width: 140px;
}

.btn-tri {
    width: 0;
    height: 0;
    border-left: 6px solid transparent;
    border-right: 6px solid transparent;
    border-top: 10px solid #aab7b8;
}

.listeners-txt {
    margin-top: 6px;
    font-size: 13px;
    line-height: 18px;
    color: #545b64;
}

.rail {
    width: 47px;
    padding: 15px 0 0 15px;
    background: #fff;
    border-left: 1px solid #d5dbdb;
    flex: none;
}

.main-scroll {
    width: 14px;
    background: linear-gradient(90deg, #fafafa, #ddd);
}

.main-scroll .sb-up,
.main-scroll .sb-down {
    left: 3px;
}

.main-scroll .sb-thumb {
    top: 214px;
    height: 409px;
    left: 0;
    right: 0;
    background: #b5b5b5;
}

/* aws footer */
.aws-foot {
    height: 62px;
    padding: 7px 16px 0 19px;
    background: #232f3e;
    border-top: 1px solid #414d5c;
    color: #fff;
    font-size: 13px;
    flex: none;
}

.foot-top {
    display: flex;
    align-items: center;
    gap: 6px;
}

.foot-shell {
    font-size: 13.5px;
}

.foot-fb {
    margin-left: 18px;
    font-size: 13.5px;
}

.foot-links {
    margin-left: auto;
    display: flex;
    gap: 28px;
}

.foot-copy {
    margin-top: 9px;
    font-size: 13.2px;
    text-align: center;
}

/* digipay window */
.digi-strip {
    height: 50px;
    background: #2d2d2d;
    align-items: flex-end;
    border-bottom: 0;
}

.digi-chev {
    width: 35px;
    height: 34px;
    margin: 0 8px 7px 7px;
    border-radius: 10px;
    background: #3a3a3a;
    display: flex;
    align-items: center;
    justify-content: center;
}

.digi-tab {
    width: 290px;
    height: 42px;
    display: flex;
    align-items: center;
    padding: 0 14px 8px 9px;
    border-radius: 10px 10px 0 0;
    background: #3c3c3c;
    color: #eee;
    font-size: 17px;
}

.digi-tab-title {
    flex: 1;
    margin-left: 11px;
}

.tab-x-on {
    color: #fff;
}

.digi-plus {
    margin: 0 0 13px 16px;
}

.digi-bar {
    height: 60px;
    background: #3c3c3c;
    border-bottom: 2px solid #222;
}

.digi-bar .tb-fox {
    margin-left: 12px;
}

.omni-digi {
    width: 397px;
    padding: 0 17px 0 7px;
    background: #2c2c2c;
    margin-left: 9px;
}

.not-secure {
    width: 134px;
    height: 32px;
    display: flex;
    align-items: center;
    gap: 5px;
    padding-left: 6px;
    margin-right: 11px;
    border-radius: 16px;
    background: #373737;
    color: #eee;
    font-size: 17.6px;
    font-weight: 600;
    white-space: nowrap;
}

.url-digi {
    color: #eee;
    font-size: 16.9px;
}

.digi-page {
    flex: 1;
    min-height: 0;
    background: #fff;
    overflow: hidden;
}

.digi-inner {
    width: 838px;
    padding-top: 170px;
    text-align: center;
    font-family: "Liberation Sans", Arial, sans-serif;
}

.digi-inner h1 {
    font-size: 73.6px;
    font-weight: 400;
    line-height: 88px;
    color: #6238d8;
    white-space: nowrap;
}

.digi-sub {
    margin: 28px 0 0 -14px;
    font-size: 29.75px;
    line-height: 38px;
    color: #666;
    white-space: nowrap;
}

.digi-btn {
    display: block;
    width: 191px;
    height: 53px;
    margin: 22px auto 0;
    line-height: 53px;
    border-radius: 4px;
    background: #5e35d6;
    color: #fff;
    font-size: 19px;
    letter-spacing: 0.4px;
    box-shadow: 0 2px 5px rgba(0, 0, 0, 0.35);
}

.digi-cards {
    margin-top: 79px;
    padding-left: 2px;
    display: flex;
    flex-wrap: wrap;
    justify-content: center;
    gap: 39px 40px;
    text-align: left;
}

.digi-card {
    width: 360px;
    height: 180px;
    padding: 21px 20px 0;
    border: 1px solid #ddd;
    border-radius: 4px;
}

.digi-card h3 {
    font-size: 30px;
    font-weight: 400;
    line-height: 38px;
    color: #6238d8;
    white-space: nowrap;
}

.digi-card p {
    width: 300px;
    margin-top: 12px;
    font-size: 17.9px;
    line-height: 25px;
    color: #666;
}
```
